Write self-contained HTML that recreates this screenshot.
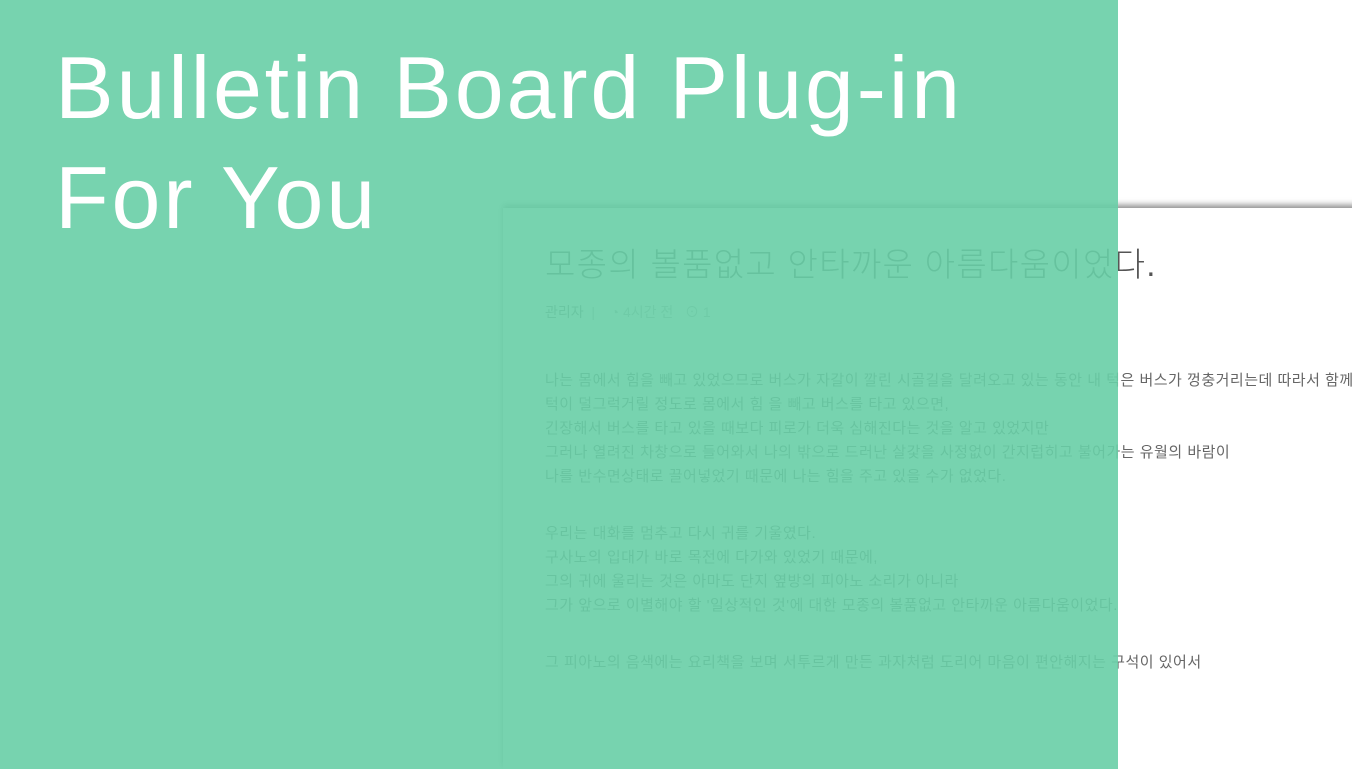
<!DOCTYPE html>
<html><head><meta charset="utf-8"><style>
html,body{margin:0;width:1352px;height:769px;overflow:hidden;background:#fff;font-family:"Liberation Sans","Noto Sans CJK KR",sans-serif;position:relative}
.card{position:absolute;left:503px;top:208px;width:900px;height:561px;background:#fff;box-shadow:0 -3px 6px rgba(0,0,0,.45);overflow:hidden}
.card h1{position:absolute;left:42px;top:30px;margin:0;font-weight:300;font-size:33px;letter-spacing:1.3px;color:#555;white-space:nowrap}
.meta{position:absolute;left:42px;top:94px;font-size:14px;color:#777;white-space:nowrap}
.meta span{color:#aaa}
.body{position:absolute;left:42px;top:161px;font-size:15px;letter-spacing:0.5px;line-height:24px;color:#666;white-space:nowrap}
.body p{margin:0 0 33px}
.ov{position:absolute;left:0;top:0;width:1118px;height:769px;background:rgba(104,206,166,.9)}
.t{position:absolute;left:55px;top:33px;color:#fff;font-size:88px;line-height:110px;letter-spacing:2.8px;white-space:nowrap}
</style></head><body>
<div class="card">
<h1>모종의 볼품없고 안타까운 아름다움이었다.</h1>
<div class="meta">관리자 <span>&nbsp;|&nbsp;&nbsp;&nbsp; ◔ 4시간 전 &nbsp; ⊙ 1</span></div>
<div class="body">
<p>나는 몸에서 힘을 빼고 있었으므로 버스가 자갈이 깔린 시골길을 달려오고 있는 동안 내 턱은 버스가 껑충거리는데 따라서 함께<br>턱이 덜그럭거릴 정도로 몸에서 힘 을 빼고 버스를 타고 있으면,<br>긴장해서 버스를 타고 있을 때보다 피로가 더욱 심해진다는 것을 알고 있었지만<br>그러나 열려진 차창으로 들어와서 나의 밖으로 드러난 살갗을 사정없이 간지럽히고 불어가는 유월의 바람이<br>나를 반수면상태로 끌어넣었기 때문에 나는 힘을 주고 있을 수가 없었다.</p>
<p>우리는 대화를 멈추고 다시 귀를 기울였다.<br>구사노의 입대가 바로 목전에 다가와 있었기 때문에,<br>그의 귀에 울리는 것은 아마도 단지 옆방의 피아노 소리가 아니라<br>그가 앞으로 이별해야 할 '일상적인 것'에 대한 모종의 볼품없고 안타까운 아름다움이었다.</p>
<p>그 피아노의 음색에는 요리책을 보며 서투르게 만든 과자처럼 도리어 마음이 편안해지는 구석이 있어서</p>
</div>
</div>
<div class="ov"></div>
<div class="t">Bulletin Board Plug-in<br>For You</div>
</body></html>
